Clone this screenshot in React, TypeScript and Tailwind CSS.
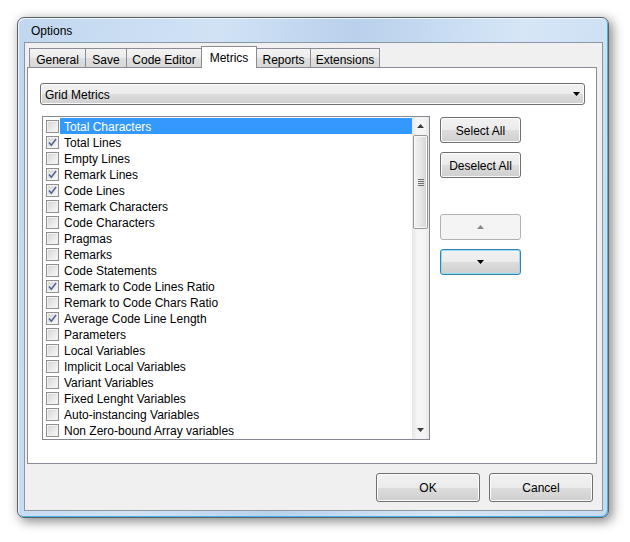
import type { ReactNode } from "react";

const ITEMS: [string, boolean][] = [
  ["Total Characters", false],
  ["Total Lines", true],
  ["Empty Lines", false],
  ["Remark Lines", true],
  ["Code Lines", true],
  ["Remark Characters", false],
  ["Code Characters", false],
  ["Pragmas", false],
  ["Remarks", false],
  ["Code Statements", false],
  ["Remark to Code Lines Ratio", true],
  ["Remark to Code Chars Ratio", false],
  ["Average Code Line Length", true],
  ["Parameters", false],
  ["Local Variables", false],
  ["Implicit Local Variables", false],
  ["Variant Variables", false],
  ["Fixed Lenght Variables", false],
  ["Auto-instancing Variables", false],
  ["Non Zero-bound Array variables", false],
];

const TABS: { label: string; w: string; active?: boolean }[] = [
  { label: "General", w: "w-[57px]" },
  { label: "Save", w: "w-[42px]" },
  { label: "Code Editor", w: "w-[76px]" },
  { label: "Metrics", w: "w-[56px]", active: true },
  { label: "Reports", w: "w-[55px]" },
  { label: "Extensions", w: "w-[70px]" },
];

const GLOSS =
  "bg-[linear-gradient(#f2f2f2_0%,#ebebeb_50%,#dddddd_50%,#cfcfcf_100%)]";

function Arrow({ up, color, size = 7 }: { up?: boolean; color: string; size?: number }) {
  const h = Math.ceil(size / 2);
  return (
    <svg width={size} height={h} viewBox={`0 0 ${size} ${h}`}>
      <polygon
        points={up ? `0,${h} ${size},${h} ${size / 2},0` : `0,0 ${size},0 ${size / 2},${h}`}
        fill={color}
      />
    </svg>
  );
}

function Button({
  children,
  className = "",
  variant = "normal",
}: {
  children: ReactNode;
  className?: string;
  variant?: "normal" | "disabled" | "focused";
}) {
  const look =
    variant === "disabled"
      ? "border-[#adb2b5] bg-[#f4f4f4]"
      : variant === "focused"
        ? `border-[#3c7fb1] ${GLOSS} shadow-[inset_0_0_0_1px_#8ee0f7]`
        : `border-[#707070] ${GLOSS} shadow-[inset_0_0_0_1px_#fbfbfb]`;
  return (
    <div className={`flex items-center justify-center rounded-[3px] border ${look} ${className}`}>
      {children}
    </div>
  );
}

function Checkbox({ checked }: { checked: boolean }) {
  return (
    <div className="flex h-[13px] w-[13px] shrink-0 items-center justify-center border border-[#8f8f8f] bg-[linear-gradient(135deg,#d6d6d6,#f9f9f9)] shadow-[inset_0_0_0_1px_#f3f3f3]">
      {checked && (
        <svg width="11" height="11" viewBox="0 0 11 11">
          <path d="M2 5.5 L4.3 8.3 L9 2" fill="none" stroke="#4f6394" strokeWidth="1.5" />
        </svg>
      )}
    </div>
  );
}

function Scrollbar() {
  return (
    <div className="flex w-[17px] shrink-0 flex-col bg-[linear-gradient(90deg,#e6e6e6,#f5f5f5_30%,#f5f5f5_70%,#e9e9e9)]">
      <div className="flex h-[18px] items-center justify-center">
        <Arrow up color="#3d3d3d" />
      </div>
      <div className="mx-px flex h-[94px] flex-col items-center justify-center gap-[1px] rounded-[2px] border border-[#979797] bg-[linear-gradient(90deg,#f4f4f4,#e6e6e6_50%,#d4d4d4)] shadow-[inset_0_0_0_1px_#fafafa]">
        <div className="h-px w-[6px] bg-[#707070]" />
        <div className="h-px w-[6px] bg-[#707070]" />
        <div className="h-px w-[6px] bg-[#707070]" />
        <div className="h-px w-[6px] bg-[#707070]" />
      </div>
      <div className="flex-1" />
      <div className="flex h-[18px] items-center justify-center">
        <Arrow color="#3d3d3d" />
      </div>
    </div>
  );
}

export default function App() {
  return (
    <div className="min-h-[542px] bg-white p-[17px] font-['Liberation_Sans',Arial,sans-serif] text-[12px] leading-none text-black">
      {/* window frame */}
      <div className="flex h-[501px] w-[592px] flex-col rounded-[7px] border border-[#5b6168] bg-[linear-gradient(100deg,#c1d7ef_0%,#d1e2f5_30%,#b9d1ec_50%,#d6e6f7_75%,#c6daf1_100%)] pb-[6px] pl-[6px] pr-[5px] shadow-[3px_3px_12px_rgba(0,0,0,0.5),inset_-1px_-1px_0_#49b3e6,inset_1px_1px_0_#eef5fc]">
        <div className="flex h-[24px] items-center pl-[7px] pt-px">Options</div>

        {/* client */}
        <div className="flex h-[469px] w-[579px] flex-col border border-[#8a97a5] bg-[#f0f0f0]">
          <div className="ml-[2px] mt-[3px] flex w-[570px] flex-col">
            {/* tabs */}
            <div className="flex h-[21px] items-end pl-[2px]">
              {TABS.map((t, i) =>
                t.active ? (
                  <div
                    key={t.label}
                    className={`${t.w} relative z-10 -mb-px flex h-[22px] justify-center border border-b-0 border-[#898c95] bg-white pt-[5px] ${i ? "-ml-px" : ""}`}
                  >
                    {t.label}
                  </div>
                ) : (
                  <div
                    key={t.label}
                    className={`${t.w} flex h-[19px] justify-center border border-b-0 border-[#898c95] bg-[linear-gradient(#f3f3f3,#ebebeb_50%,#dfdfdf_50%,#d8d8d8)] pt-[5px] ${i ? "-ml-px" : ""}`}
                  >
                    {t.label}
                  </div>
                ),
              )}
            </div>

            {/* tab panel */}
            <div className="flex h-[397px] flex-col border border-[#898c95] bg-white">
              <div
                className={`ml-[12px] mt-[15px] flex h-[22px] w-[545px] items-center justify-between rounded-[3px] border border-[#707070] ${GLOSS} pl-[4px] pr-[4px] shadow-[inset_0_0_0_1px_#fbfbfb]`}
              >
                <span className="pt-[2px]">Grid Metrics</span>
                <Arrow color="#000" />
              </div>

              <div className="ml-[14px] mt-[11px] flex">
                {/* list */}
                <div className="flex h-[324px] w-[388px] border border-[#828790] bg-white">
                  <div className="flex min-w-0 flex-1 flex-col overflow-hidden pt-px">
                    {ITEMS.map(([label, checked], i) => (
                      <div key={label} className="flex h-[16px] shrink-0 items-center pl-[3px]">
                        <Checkbox checked={checked} />
                        <div
                          className={`ml-[1px] flex h-[16px] flex-1 items-center whitespace-nowrap pl-[4px] pt-[2px] ${i === 0 ? "bg-[#3399ff] text-white" : ""}`}
                        >
                          {label}
                        </div>
                      </div>
                    ))}
                  </div>
                  <Scrollbar />
                </div>

                {/* side buttons */}
                <div className="ml-[10px] mt-px flex flex-col">
                  <Button className="h-[26px] w-[81px] pt-px">Select All</Button>
                  <Button className="mt-[9px] h-[26px] w-[81px] pt-px">Deselect All</Button>
                  <Button variant="disabled" className="mt-[36px] h-[26px] w-[81px]">
                    <Arrow up color="#8a8a8a" />
                  </Button>
                  <Button variant="focused" className="mt-[9px] h-[26px] w-[81px]">
                    <Arrow color="#000" />
                  </Button>
                </div>
              </div>
            </div>
          </div>

          {/* dialog buttons */}
          <div className="mt-[9px] flex justify-end gap-[9px] pr-[9px]">
            <Button className="h-[29px] w-[104px] pt-px">OK</Button>
            <Button className="h-[29px] w-[104px] pt-px">Cancel</Button>
          </div>
        </div>
      </div>
    </div>
  );
}
